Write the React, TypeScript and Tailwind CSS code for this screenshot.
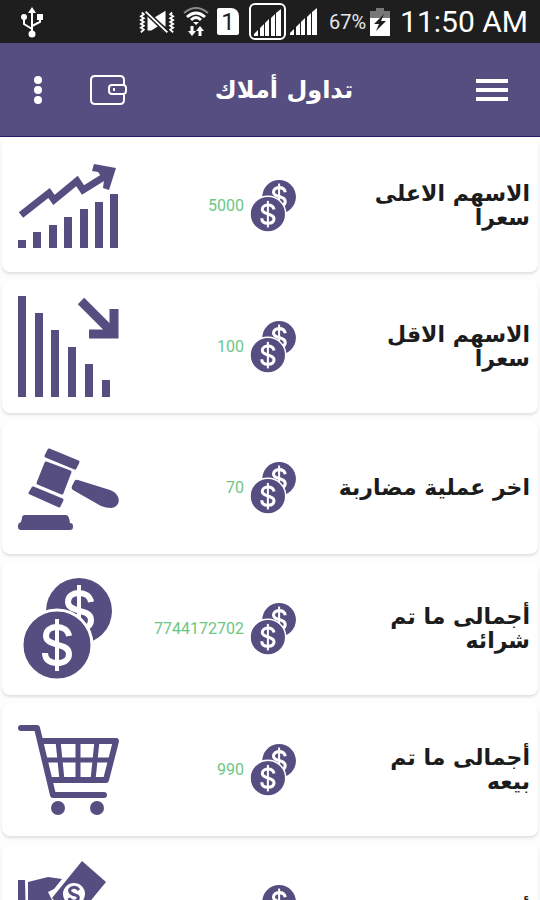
import React from "react";

type IconProps = { className?: string };

const GrowthIcon: React.FC<IconProps> = ({ className }) => (
  <svg viewBox="0 0 102 102" className={className} fill="currentColor">
    <path
      d="M3 60 31 38 36 45 59 26 65 35 89 20"
      fill="none"
      stroke="currentColor"
      strokeWidth="7"
    />
    <path d="M76 9 98 13 91 35 85 33 86 25 80 17 74 16Z" />
    <path d="M0 85h8v8h-8zM15 77h8v16h-8zM31 70h8v23h-8zM46 62h8v31h-8zM62 54h8v39h-8zM77 47h8v46h-8zM92 39h8v54h-8z" />
  </svg>
);

const DeclineIcon: React.FC<IconProps> = ({ className }) => (
  <svg viewBox="0 0 102 102" className={className} fill="currentColor">
    <path d="M0 0h8v101h-8zM17 17h8v84h-8zM33 34h8v67h-8zM50 51h8v50h-8zM67 68h8v33h-8zM84 84h8v17h-8z" />
    <path
      d="M63 5 94 36M96 13V38H71"
      fill="none"
      stroke="currentColor"
      strokeWidth="9"
    />
  </svg>
);

const GavelIcon: React.FC<IconProps> = ({ className }) => (
  <svg viewBox="0 0 102 102" className={className} fill="currentColor">
    <g stroke="currentColor" strokeWidth="3" strokeLinejoin="round">
      <path d="M31 13 60 25 57 31 28 19Z" />
      <path d="M28 26 52 35 44 56 20 46Z" />
      <path d="M15 51 44 63 41 69 12 56Z" />
    </g>
    <path d="M60 43 92 53C105 58 102 71 93 71Q88 71 83 69L55 53Q53 52 54 49L56 45Q57 42 60 43Z" />
    <path d="M7 78H48Q50 78 51 81L52 86Q55 86 55 89V90Q55 93 52 93H3Q0 93 0 90V89Q0 86 3 85L4 81Q4 78 7 78Z" />
  </svg>
);

const Dollar = () => (
  <g fill="none" stroke="#fff">
    <path
      d="M12 -9C11 -15 6 -18 0 -18C-7 -18 -11 -14 -11 -9C-11 2 12 -3 12 9C12 15 7 18 0 18C-7 18 -12 15 -12 8"
      strokeWidth="6"
    />
    <path d="M0 -26V26" strokeWidth="4" />
  </g>
);

const CoinsIcon: React.FC<IconProps> = ({ className }) => (
  <svg viewBox="0 0 102 102" className={className} fill="currentColor">
    <circle cx="61" cy="33" r="33" />
    <g transform="translate(61 33)">
      <Dollar />
    </g>
    <circle cx="39" cy="67" r="35" stroke="#fff" strokeWidth="3" />
    <g transform="translate(39 67)">
      <Dollar />
    </g>
  </svg>
);

const CartIcon: React.FC<IconProps> = ({ className }) => (
  <svg viewBox="0 0 102 102" className={className} fill="none" stroke="currentColor">
    <path
      d="M3 9H19L35 76H86"
      strokeWidth="6"
      strokeLinecap="round"
      strokeLinejoin="round"
    />
    <path d="M23 22H98L88 61H32" strokeWidth="6" strokeLinejoin="round" />
    <path d="M27 41H93M40 22 44 61M60 22V61M79 22 75 61" strokeWidth="5" />
    <g fill="currentColor" stroke="none">
      <circle cx="40" cy="89" r="7" />
      <circle cx="79" cy="89" r="7" />
    </g>
  </svg>
);

const HandCashIcon: React.FC<IconProps> = ({ className }) => (
  <svg viewBox="0 0 102 102" className={className} fill="currentColor">
    <path d="M0 20H7L8 62H0ZM10 22 30 17 44 19 36 29 30 32 34 40 46 46 44 62H10Z" />
    <path d="M64 1 88 22 56 61 34 38Z" />
    <circle cx="56" cy="34" r="11" fill="#fff" />
    <path
      d="M61 30C57 25 50 28 52 32C54 36 62 34 60 39C58 43 52 41 51 38"
      fill="none"
      stroke="currentColor"
      strokeWidth="3"
    />
  </svg>
);

const SignalIcon: React.FC<IconProps> = ({ className }) => (
  <svg viewBox="0 0 27 27" className={className} fill="currentColor">
    <path d="M0 27V25L4 21V27ZM6 27V19L10 15V27ZM11 27V14L15 10V27ZM17 27V9L21 5V27ZM22 27V4L27 0V27Z" />
  </svg>
);

const StatusBar = () => (
  <div className="flex h-[43px] items-center bg-[#1e1e1e] pl-5 pr-3 text-white">
    <svg viewBox="0 0 22 32" className="h-8 w-6" fill="currentColor">
      <path
        d="M11 5V27M11 23 3 18V11M11 20 19 16V10"
        fill="none"
        stroke="currentColor"
        strokeWidth="2"
      />
      <path d="M11 1 15 7H7Z" />
      <circle cx="3" cy="11" r="3" />
      <path d="M16 8h6v6h-6z" />
      <circle cx="11" cy="28" r="3.500" />
    </svg>

    <div className="ml-auto flex items-center gap-1">
      <svg viewBox="0 0 38 26" className="mr-1 h-7 w-9" fill="currentColor">
        <path d="M9 6V22L13 22 21 17ZM28 1V18L15 9ZM28 21V25L24 22Z" />
        <path
          d="M7 2 30 24"
          fill="none"
          stroke="#1e1e1e"
          strokeWidth="5"
        />
        <path
          d="M7 2 30 24M3 3 5 5 2 7 5 9 2 11 5 13 2 15 5 17 2 19 5 21 2 24M35 3 33 5 36 7 33 9 36 11 33 13 36 15 33 17 36 19 33 21 36 24"
          fill="none"
          stroke="currentColor"
          strokeWidth="2"
        />
      </svg>
      <svg viewBox="0 0 26 30" className="mr-1 h-[30px] w-[26px]" fill="none">
        <path d="M1 6Q13 -4 25 6" stroke="#888" strokeWidth="2" />
        <path d="M4 10Q13 2 22 10M8 13Q13 8 18 13" stroke="#fff" strokeWidth="3" />
        <path d="M10 15H16L13 18Z" fill="#fff" />
        <path d="M9 19V26M17 29V22" stroke="#fff" strokeWidth="3" />
        <path d="M5 24H13L9 29ZM13 24H21L17 19Z" fill="#fff" />
      </svg>
      <span className="flex h-[27px] w-[22px] items-center justify-center rounded-xs rounded-tr-lg bg-white text-2xl leading-none text-[#1e1e1e]">
        1
      </span>
      <span className="ml-1.5 flex h-[37px] w-[37px] items-end justify-center rounded-md border-2 border-white pb-0.5">
        <SignalIcon className="h-[27px] w-[27px]" />
      </span>
      <SignalIcon className="h-[27px] w-[27px]" />
      <span className="ml-2 text-xl text-gray-200">67%</span>
      <svg viewBox="0 0 20 28" className="h-7 w-5">
        <path d="M6 0H14V3H20V10H0V3H6Z" fill="#777" />
        <path d="M0 10H20V28H0Z" fill="#fff" />
        <path d="M14 6 4 16H9L6 23 16 13H11Z" fill="#1e1e1e" />
      </svg>
      <span className="ml-1.5 text-3xl leading-none">11:50 AM</span>
    </div>
  </div>
);

const Header = () => (
  <header className="flex h-[94px] items-center border-b border-[#2b1a66] bg-[#564d80] px-7 text-white">
    <button aria-label="المزيد" className="flex w-5 justify-center">
      <svg viewBox="0 0 8 28" className="h-7 w-2" fill="currentColor">
        <circle cx="4" cy="4" r="4" />
        <circle cx="4" cy="14" r="4" />
        <circle cx="4" cy="24" r="4" />
      </svg>
    </button>
    <button aria-label="المحفظة" className="ml-10">
      <svg
        viewBox="0 0 40 32"
        className="h-8 w-10"
        fill="none"
        stroke="currentColor"
        strokeWidth="2"
      >
        <path d="M36 11V6Q36 2 32 2H7Q3 2 3 6V26Q3 30 7 30H32Q36 30 36 26V21" />
        <rect x="21" y="11" width="17" height="9" rx="3" />
        <path d="M26 14v3" />
      </svg>
    </button>
    <h1
      dir="rtl"
      className="flex-1 pr-8 text-center font-['DejaVu_Sans',sans-serif] text-2xl font-bold"
    >
      تداول أملاك
    </h1>
    <button aria-label="القائمة" className="flex w-10 justify-center">
      <svg viewBox="0 0 32 24" className="h-6 w-8" fill="currentColor">
        <path d="M0 1h32v4h-32zM0 10h32v4h-32zM0 19h32v4h-32z" />
      </svg>
    </button>
  </header>
);

const stats = [
  { label: "الاسهم الاعلى\nسعرا", value: "5000", Icon: GrowthIcon },
  { label: "الاسهم الاقل\nسعرا", value: "100", Icon: DeclineIcon },
  { label: "اخر عملية مضاربة", value: "70", Icon: GavelIcon },
  { label: "أجمالى ما تم\nشرائه", value: "7744172702", Icon: CoinsIcon },
  { label: "أجمالى ما تم\nبيعه", value: "990", Icon: CartIcon },
  { label: "أخر عملية تداول", value: "", Icon: HandCashIcon },
];

const App: React.FC = () => {
  return (
    <div className="flex h-screen flex-col overflow-hidden bg-[#fdfdfd] font-[Roboto,sans-serif]">
      <StatusBar />
      <Header />
      <main className="flex-1 space-y-2 overflow-hidden px-0.5 pt-0.5">
        {stats.map(({ label, value, Icon }) => (
          <section
            key={label}
            className="flex h-[133px] items-center rounded-lg bg-white pl-4 pr-2 shadow-[0_2px_3px_rgba(0,0,0,0.12)]"
          >
            <Icon className="h-[102px] w-[102px] shrink-0 text-[#564d80]" />
            <div className="ml-auto flex items-center gap-1">
              <span className="text-base text-[#6cc784]">{value}</span>
              <CoinsIcon className="h-[52px] w-[52px] text-[#564d80]" />
            </div>
            <h2
              dir="rtl"
              className="ml-8 w-[198px] whitespace-pre-line font-['DejaVu_Sans',sans-serif] text-[22px] font-bold leading-6 text-[#1c1c1c]"
            >
              {label}
            </h2>
          </section>
        ))}
      </main>
    </div>
  );
};

export default App;
